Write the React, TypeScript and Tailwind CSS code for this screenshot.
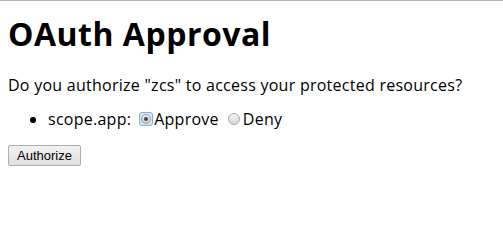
export default function App() {
  return (
    <div className="w-[503px] h-[236px] bg-white border-t border-[#b4b4b4] font-['Open_Sans','Noto_Sans',sans-serif] text-black">
      <div className="px-2">
        <h1 className="text-[32px] font-bold leading-[38px] pt-[14px] tracking-[0.5px]">OAuth Approval</h1>
        <p className="text-[16px] leading-[22px] mt-[21px] tracking-[0.26px]">Do you authorize "zcs" to access your protected resources?</p>
        <ul className="list-disc pl-10 mt-[12px] text-[16px] leading-[22px] tracking-[0.26px]">
          <li>
            <span className="inline-flex items-center">
              scope.app:
              <span className="inline-flex items-center justify-center w-[14px] h-[14px] rounded-[3px] border border-[#7aaee3] bg-[#dce8f6] ml-[8px] mr-[1px]">
                <span className="flex items-center justify-center w-[10px] h-[10px] rounded-full border border-[#9a9a9a] bg-gradient-to-b from-[#eeeeee] to-[#cfcfcf]">
                  <span className="w-[4px] h-[4px] rounded-full bg-[#444]"></span>
                </span>
              </span>
              Approve
              <span className="inline-block w-[12px] h-[12px] rounded-full border border-[#a8a8a8] bg-gradient-to-b from-[#f4f4f4] to-[#d6d6d6] ml-[9px] mr-[3px]"></span>
              Deny
            </span>
          </li>
        </ul>
        <button className="mt-[15px] h-[21px] px-[8px] border border-[#adadad] rounded-[2px] bg-gradient-to-b from-[#f2f2f2] to-[#e0e0e0] text-[13px] leading-[17px] font-['Liberation_Sans',Arial,sans-serif] text-black">Authorize</button>
      </div>
    </div>
  );
}
